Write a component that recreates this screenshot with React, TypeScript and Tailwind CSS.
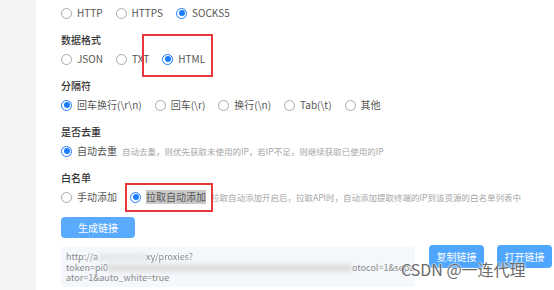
import React from "react";

type Opt = { label: string; checked?: boolean };

const FONT = "font-['Noto_Sans_CJK_SC','Noto_Sans',sans-serif]";

function Radio({ checked }: { checked?: boolean }) {
  return (
    <span
      className={`flex size-[11px] shrink-0 items-center justify-center rounded-full border bg-white ${
        checked ? "border-[#1a7cff]" : "border-[#a9a9a9]"
      }`}
    >
      {checked && <span className="size-[6px] rounded-full bg-[#1a7cff]" />}
    </span>
  );
}

function Option({ label, checked, highlight }: Opt & { highlight?: boolean }) {
  return (
    <label className="mr-[13px] flex items-center gap-[5px]">
      <Radio checked={checked} />
      <span
        className={`text-[10px] leading-[14px] text-[#555] ${
          highlight ? "bg-[#c9c9c9] text-[#444]" : ""
        }`}
      >
        {label}
      </span>
    </label>
  );
}

function Label({ children }: { children: React.ReactNode }) {
  return (
    <div className="mt-[6px] flex h-[20px] items-center text-[10px] font-medium text-[#333]">
      {children}
    </div>
  );
}

function Row({ children }: { children: React.ReactNode }) {
  return <div className="flex h-[20px] items-center whitespace-nowrap">{children}</div>;
}

export default function App() {
  return (
    <div className={`flex h-[290px] w-[554px] overflow-hidden bg-white ${FONT}`}>
      <div className="w-[36px] shrink-0 bg-[#f2f3f5]" />

      <div className="relative flex-1 pl-[25px] pt-[3px]">
        {/* protocol */}
        <Row>
          <Option label="HTTP" />
          <Option label="HTTPS" />
          <Option label="SOCKS5" checked />
        </Row>

        <Label>数据格式</Label>
        <Row>
          <Option label="JSON" />
          <Option label="TXT" />
          <Option label="HTML" checked />
        </Row>

        <Label>分隔符</Label>
        <Row>
          <Option label="回车换行(\r\n)" checked />
          <Option label="回车(\r)" />
          <Option label="换行(\n)" />
          <Option label="Tab(\t)" />
          <Option label="其他" />
        </Row>

        <Label>是否去重</Label>
        <Row>
          <Option label="自动去重" checked />
          <span className="-ml-[8px] text-[8.5px] text-[#a5a5a5]">
            自动去重，则优先获取未使用的IP，若IP不足，则继续获取已使用的IP
          </span>
        </Row>

        <Label>白名单</Label>
        <Row>
          <Option label="手动添加" />
          <Option label="拉取自动添加" checked highlight />
          <span className="-ml-[8px] text-[8.5px] text-[#a5a5a5]">
            拉取自动添加开启后，拉取API时，自动添加提取终端的IP到该资源的白名单列表中
          </span>
        </Row>

        {/* generate */}
        <button className="mt-[10px] flex h-[21px] w-[74px] items-center justify-center rounded-[4px] bg-[#5aabff] text-[10px] text-white">
          生成链接
        </button>

        <div className="mt-[9px] flex items-start">
          <div className="h-[40px] w-[354px] overflow-hidden rounded-[3px] bg-[#f4f7fb] px-[5px] pt-[5px] text-[9px] leading-[10.5px] text-[#8a8a8a] whitespace-nowrap">
            <div>
              http://a
              <span className="inline-block h-[7px] w-[48px] bg-[#e6e8eb] align-middle blur-[2px]" />
              <span className="inline-block blur-[0.5px]">xy/proxies?</span>
            </div>
            <div>
              token=pi0
              <span className="inline-block h-[8px] w-[244px] bg-[#dedede] align-middle blur-[2px]" />
              otocol=1&amp;sepa
            </div>
            <div>ator=1&amp;auto_white=true</div>
          </div>
          <button className="ml-[14px] -mt-[2px] flex h-[23px] w-[55px] items-center justify-center rounded-[4px] bg-[#4ea6ff] text-[10px] text-white">
            复制链接
          </button>
          <button className="ml-[13px] -mt-[2px] flex h-[23px] w-[55px] items-center justify-center rounded-[4px] bg-[#4ea6ff] text-[10px] text-white">
            打开链接
          </button>
        </div>

        {/* annotation boxes */}
        <div className="pointer-events-none absolute left-[106px] top-[34px] h-[43px] w-[71px] border-2 border-[#e8383b]" />
        <div className="pointer-events-none absolute left-[89px] top-[183px] h-[29px] w-[88px] border-2 border-[#e8383b]" />

        {/* watermark */}
        <div className="pointer-events-none absolute left-[365px] top-[258px] text-[16px] leading-[22px] text-[#6a6a6a] [text-shadow:0_0_2px_#fff,0_0_2px_#fff]">
          CSDN @一连代理
        </div>
      </div>
    </div>
  );
}
